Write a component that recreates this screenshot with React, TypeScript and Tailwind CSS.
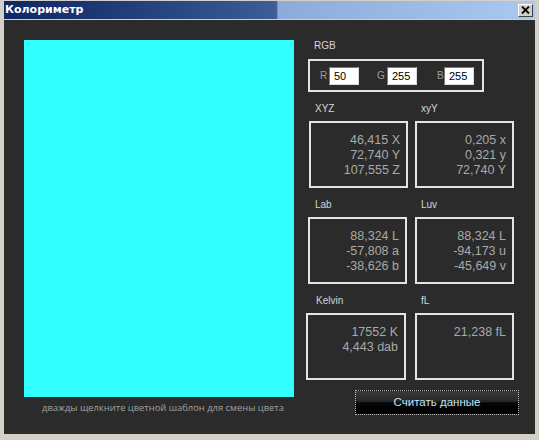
import React from "react";

const sans = { fontFamily: '"Liberation Sans", Arial, sans-serif' };

function Field({ v }: { v: string }) {
  return (
    <div className="shrink-0 h-[18px] w-[30px] bg-white border border-[#7a7a7a] border-r-[#dcdcdc] border-b-[#dcdcdc] pl-[4px] text-[11px] leading-[16px] text-black">
      {v}
    </div>
  );
}

function Box({ lines, w = "w-[99px]" }: { lines: string[]; w?: string }) {
  return (
    <div className={`${w} h-[67px] border-2 border-[#e4e4e4] pt-[10px] pr-[6px] text-right text-[12.5px] leading-[15px] text-[#a9a9a9]`}>
      {lines.map((l) => (
        <div key={l}>{l}</div>
      ))}
    </div>
  );
}

function Label({ t, pl }: { t: string; pl: string }) {
  return <div className={`${pl} h-[12px] text-[10px] leading-[12px] text-[#d6d6d6]`}>{t}</div>;
}

export default function App() {
  return (
    <div
      className="w-[539px] h-[440px] bg-[#d4d0c8] pl-[4px] pr-[4px] pt-[1px] pb-[6px] flex flex-col overflow-hidden"
      style={sans}
    >
      {/* title bar */}
      <div
        className="h-[18px] flex items-center justify-between pl-[1px] pr-[2px]"
        style={{
          background:
            "linear-gradient(90deg,#0e2766 0%,#27457f 30%,#3e5d98 51.3%,#8cabd8 51.6%,#a9c9f0 100%)",
        }}
      >
        <span
          className="text-white font-bold text-[11px] leading-[18px]"
          style={{ fontFamily: '"DejaVu Sans", Verdana, sans-serif' }}
        >
          Колориметр
        </span>
        <div className="w-[15px] h-[13px] bg-[#d4d0c8] border border-white border-r-[#404040] border-b-[#404040] flex items-center justify-center">
          <svg width="9" height="8" viewBox="0 0 9 8">
            <path d="M1 0.5 L8 7.5 M8 0.5 L1 7.5" stroke="#000" strokeWidth="1.8" />
          </svg>
        </div>
      </div>
      {/* body */}
      <div className="mt-[1px] flex-1 bg-[#2b2b2b] flex">
        {/* left column */}
        <div className="pl-[20px] pt-[20px] flex flex-col">
          <div className="w-[270px] h-[357px] bg-[#32ffff]" />
          <div
            className="mt-[5px] pl-[8px] h-[12px] text-center text-[9.4px] leading-[12px] text-[#a0a0a0]"
            style={{ fontFamily: '"Open Sans", "Noto Sans", sans-serif' }}
          >
            дважды щелкните цветной шаблон для смены цвета
          </div>
        </div>
        {/* right column */}
        <div className="ml-[12px] pt-[20px] flex flex-col">
          <Label t="RGB" pl="pl-[8px]" />
          <div className="mt-[7px] ml-[2px] w-[176px] h-[33px] border-2 border-[#e4e4e4] flex items-center pl-[10px] text-[10px] text-[#9c9c9c]">
            <span className="shrink-0 w-[9px]">R</span>
            <Field v="50" />
            <span className="shrink-0 ml-[18px] w-[10px]">G</span>
            <Field v="255" />
            <span className="shrink-0 ml-[20px] w-[7px]">B</span>
            <Field v="255" />
          </div>

          <div className="mt-[11px] flex">
            <div className="ml-[3px] flex flex-col">
              <Label t="XYZ" pl="pl-[6px]" />
              <div className="mt-[6px]">
                <Box lines={["46,415 X", "72,740 Y", "107,555 Z"]} />
              </div>
            </div>
            <div className="ml-[7px] flex flex-col">
              <Label t="xyY" pl="pl-[6px]" />
              <div className="mt-[6px]">
                <Box lines={["0,205 x", "0,321 y", "72,740 Y"]} />
              </div>
            </div>
          </div>

          <div className="mt-[11px] flex">
            <div className="ml-[2px] flex flex-col">
              <Label t="Lab" pl="pl-[7px]" />
              <div className="mt-[6px]">
                <Box lines={["88,324 L", "-57,808 a", "-38,626 b"]} />
              </div>
            </div>
            <div className="ml-[8px] flex flex-col">
              <Label t="Luv" pl="pl-[6px]" />
              <div className="mt-[6px]">
                <Box lines={["88,324 L", "-94,173 u", "-45,649 v"]} />
              </div>
            </div>
          </div>

          <div className="mt-[11px] flex">
            <div className="flex flex-col">
              <Label t="Kelvin" pl="pl-[10px]" />
              <div className="mt-[6px]">
                <Box w="w-[100px]" lines={["17552 K", "4,443 dab"]} />
              </div>
            </div>
            <div className="ml-[9px] flex flex-col">
              <Label t="fL" pl="pl-[6px]" />
              <div className="mt-[6px]">
                <Box lines={["21,238 fL"]} />
              </div>
            </div>
          </div>

          <div
            className="mt-[10px] ml-[49px] w-[164px] h-[25px] border border-dotted border-[#bdbdbd] flex items-center justify-center text-[11.5px] text-[#c4e2f2]"
            style={{
              background: "linear-gradient(180deg,#3a3a3a 0%,#262626 45%,#050505 52%,#000 100%)",
            }}
          >
            Считать данные
          </div>
        </div>
      </div>
    </div>
  );
}
